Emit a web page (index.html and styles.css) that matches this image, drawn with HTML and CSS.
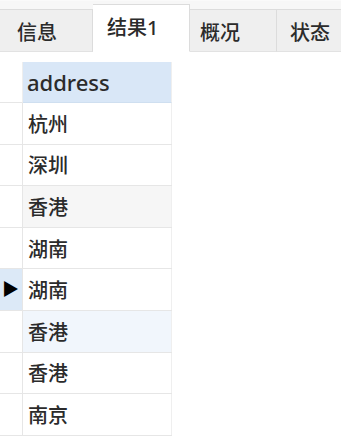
FILE: index.html
```html
<!DOCTYPE html>
<html lang="zh-CN">
<head>
    <meta charset="UTF-8">
    <meta name="viewport" content="width=device-width, initial-scale=1.0">
    <title>结果1</title>
    <link rel="stylesheet" href="styles.css">
</head>
<body>
    <div class="tabs">
        <div class="tab">信息</div>
        <div class="tab active">结果1</div>
        <div class="tab">概况</div>
        <div class="tab last">状态</div>
    </div>

    <div class="grid">
        <div class="row head">
            <div class="marker"></div>
            <div class="cell">address</div>
        </div>
        <div class="row">
            <div class="marker"></div>
            <div class="cell">杭州</div>
        </div>
        <div class="row">
            <div class="marker"></div>
            <div class="cell">深圳</div>
        </div>
        <div class="row gray">
            <div class="marker"></div>
            <div class="cell">香港</div>
        </div>
        <div class="row">
            <div class="marker"></div>
            <div class="cell">湖南</div>
        </div>
        <div class="row current">
            <div class="marker">▶</div>
            <div class="cell">湖南</div>
        </div>
        <div class="row tint">
            <div class="marker"></div>
            <div class="cell">香港</div>
        </div>
        <div class="row">
            <div class="marker"></div>
            <div class="cell">香港</div>
        </div>
        <div class="row">
            <div class="marker"></div>
            <div class="cell">南京</div>
        </div>
    </div>
</body>
</html>
```

FILE: styles.css
```css
:root {
    --line: #e6e6e6;
    --tab-bg: #efefef;
    --head-bg: #d9e7f7;
    --text: #2b2b2b;
}

* {
    margin: 0;
    padding: 0;
    box-sizing: border-box;
}

body {
    font-family: "Noto Sans", "Noto Sans CJK SC", sans-serif;
    font-size: 20px;
    font-weight: 500;
    color: var(--text);
    background: #fff;
    width: 341px;
    height: 446px;
    overflow: hidden;
}

/* Tab bar */
.tabs {
    display: flex;
    align-items: flex-end;
    height: 52px;
    padding-top: 4px;
    background: #f7f7f7;
    border-top: 1px solid #fafafa;
}

.tab {
    height: 43px;
    width: 93px;
    padding-left: 17px;
    padding-top: 2px;
    display: flex;
    align-items: center;
    background: var(--tab-bg);
    border-top: 1px solid #dcdcdc;
    border-right: 1px solid #dcdcdc;
    border-bottom: 1px solid #e2e2e2;
}

.tab.active {
    height: 48px;
    width: 97px;
    padding-left: 14px;
    padding-top: 0;
    padding-bottom: 4px;
    background: #fff;
    border-bottom-color: #fff;
}

.tab:nth-child(3) {
    width: 87px;
    padding-left: 10px;
}

.tab.last {
    flex: 1;
    padding-left: 13px;
    border-right: none;
}

/* Result grid */
.grid {
    margin-top: 10px;
    width: 172px;
}

.row {
    display: flex;
    height: 41.6px;
    border-bottom: 1px solid var(--line);
}

.row.head {
    height: 41px;
    border-bottom: none;
}

.marker {
    width: 23px;
    flex-shrink: 0;
    border-right: 1px solid var(--line);
    font-size: 17px;
    line-height: 40px;
    color: #000;
    padding-left: 2px;
}

.head .marker {
    border-right-color: #eee;
    border-bottom: 1px solid var(--line);
}

.cell {
    flex: 1;
    padding-left: 5px;
    display: flex;
    align-items: center;
    border-right: 1px solid #efefef;
}

.head .cell {
    background: var(--head-bg);
    font-size: 22px;
    padding-left: 4px;
    border-bottom: 1px solid #cfdff0;
}

.row.gray .cell {
    background: #f6f6f6;
}

.row.current .marker {
    background: #dce9f7;
}

.row.tint .cell {
    background: #f1f6fc;
}
```
